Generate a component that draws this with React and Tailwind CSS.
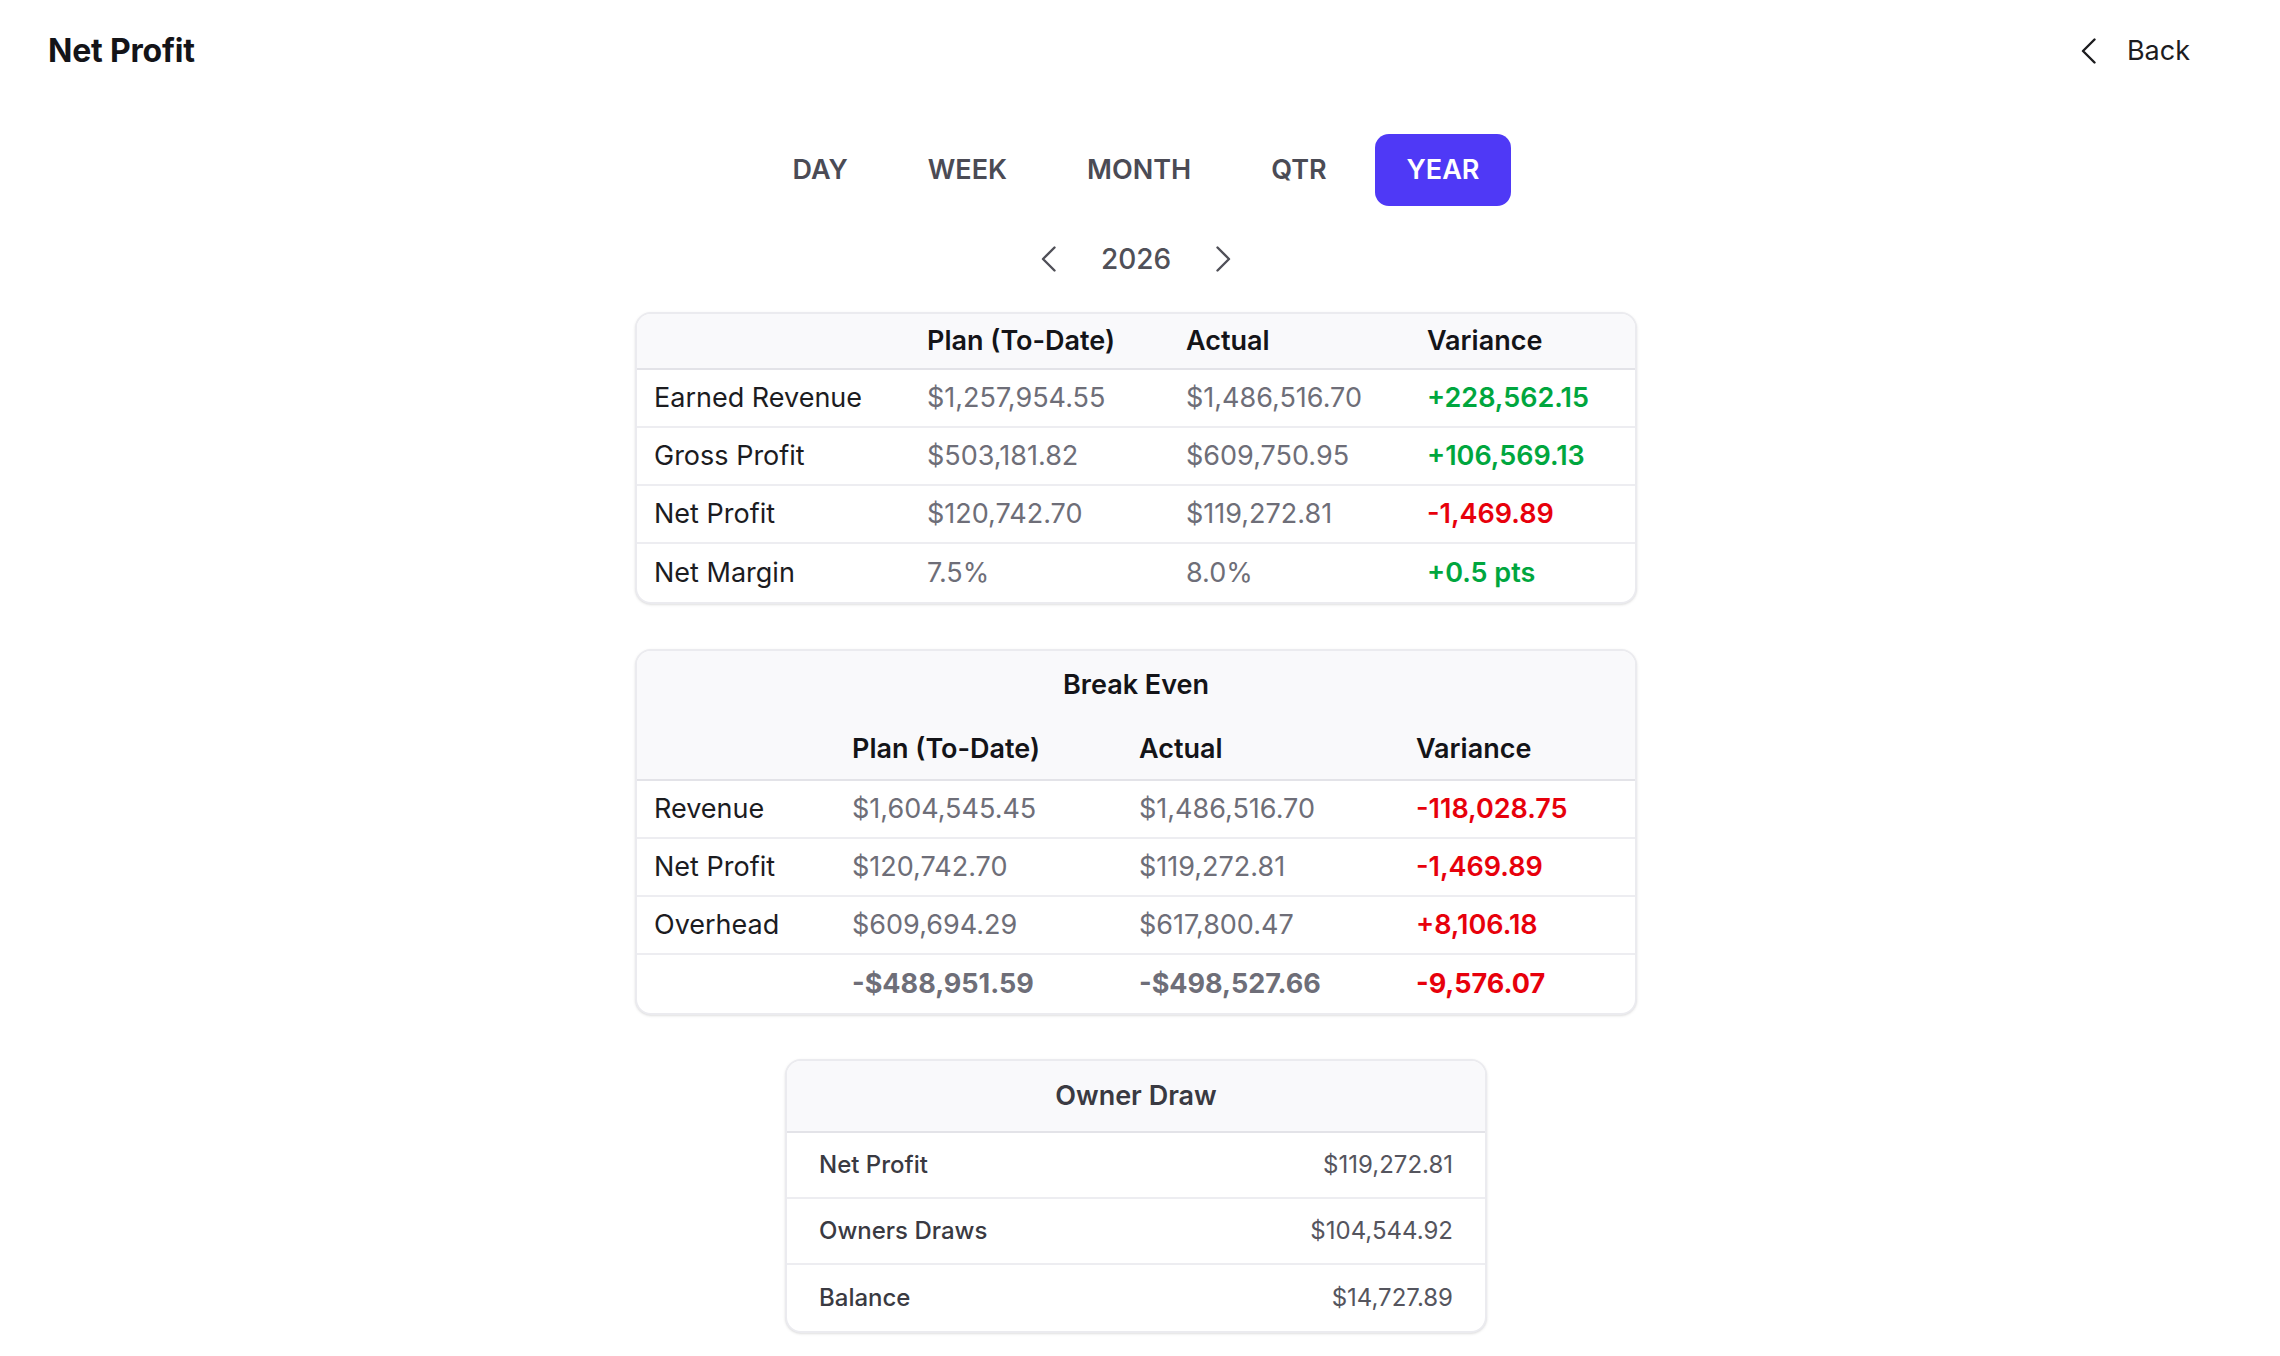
import React from 'react';

const tabs = ['DAY', 'WEEK', 'MONTH', 'QTR', 'YEAR'];

const summary = [
  { label: 'Earned Revenue', plan: '$1,257,954.55', actual: '$1,486,516.70', variance: '+228,562.15', good: true },
  { label: 'Gross Profit', plan: '$503,181.82', actual: '$609,750.95', variance: '+106,569.13', good: true },
  { label: 'Net Profit', plan: '$120,742.70', actual: '$119,272.81', variance: '-1,469.89', good: false },
  { label: 'Net Margin', plan: '7.5%', actual: '8.0%', variance: '+0.5 pts', good: true },
];

const breakEven = [
  { label: 'Revenue', plan: '$1,604,545.45', actual: '$1,486,516.70', variance: '-118,028.75' },
  { label: 'Net Profit', plan: '$120,742.70', actual: '$119,272.81', variance: '-1,469.89' },
  { label: 'Overhead', plan: '$609,694.29', actual: '$617,800.47', variance: '+8,106.18' },
];

const ownerDraw = [
  { label: 'Net Profit', value: '$119,272.81' },
  { label: 'Owners Draws', value: '$104,544.92' },
  { label: 'Balance', value: '$14,727.89' },
];

const Chevron = ({ dir = 'left', className = '' }) => (
  <svg width="15" height="26" viewBox="0 0 15 26" fill="none" className={className}>
    <path
      d={dir === 'left' ? 'M13.5 1.5 L2 13 L13.5 24.5' : 'M1.5 1.5 L13 13 L1.5 24.5'}
      stroke="currentColor"
      strokeWidth="2.4"
      strokeLinecap="round"
      strokeLinejoin="round"
    />
  </svg>
);

const App = () => {
  return (
    <div className="min-h-screen bg-white font-[Inter,'Noto_Sans',sans-serif] text-[#1c1c1f] pb-6">
      {/* top bar */}
      <div className="flex items-center justify-between pl-[48px] pr-[90px] pt-[32px]">
        <h1 className="text-[32px] leading-[38px] font-bold tracking-[-0.2px] text-[#141418]">Net Profit</h1>
        <button className="flex items-center gap-[31px] text-[27px] leading-[38px] text-[#1c1c1f]">
          <Chevron dir="left" />
          Back
        </button>
      </div>

      <div className="pr-[8px]">
        {/* period tabs */}
        <div className="flex justify-center gap-4 mt-[64px]">
          {tabs.map((t) => (
            <button
              key={t}
              className={
                t === 'YEAR'
                  ? 'h-[72px] px-[32px] rounded-[14px] bg-indigo-600 text-white text-[27px] font-semibold'
                  : 'h-[72px] px-[32px] rounded-[14px] text-[#4b4b55] text-[27px] font-semibold'
              }
            >
              {t}
            </button>
          ))}
        </div>

        {/* year nav */}
        <div className="flex items-center justify-center gap-[45px] mt-[34px] text-[#505058]">
          <Chevron dir="left" />
          <span className="text-[28px] leading-[38px] font-medium">2026</span>
          <Chevron dir="right" />
        </div>

        {/* summary table */}
        <div className="mx-auto mt-[34px] w-[1002px] rounded-[16px] border-2 border-[#ebebef] bg-white shadow-sm overflow-hidden text-[27px]">
          <div className="grid grid-cols-[273px_259px_241px_1fr] h-[56px] items-center bg-[#f9f9fb] border-b-2 border-[#e3e3e8] font-semibold text-[#141418]">
            <div />
            <div className="px-[17px]">Plan (To-Date)</div>
            <div className="px-[17px]">Actual</div>
            <div className="px-[17px]">Variance</div>
          </div>
          {summary.map((r, i) => (
            <div
              key={r.label}
              className={`grid grid-cols-[273px_259px_241px_1fr] h-[58px] items-center ${i < summary.length - 1 ? 'border-b-2 border-[#ededf1]' : ''}`}
            >
              <div className="px-[17px] text-[#1c1c1f]">{r.label}</div>
              <div className="px-[17px] text-[#6e6e78]">{r.plan}</div>
              <div className="px-[17px] text-[#6e6e78]">{r.actual}</div>
              <div className={`px-[17px] font-semibold ${r.good ? 'text-green-600' : 'text-red-600'}`}>{r.variance}</div>
            </div>
          ))}
        </div>

        {/* break even */}
        <div className="mx-auto mt-[45px] w-[1002px] rounded-[16px] border-2 border-[#ebebef] bg-white shadow-sm overflow-hidden text-[27px]">
          <div className="bg-[#f9f9fb] border-b-2 border-[#e3e3e8]">
            <div className="h-[68px] flex items-center justify-center font-semibold text-[#141418]">Break Even</div>
            <div className="grid grid-cols-[198px_287px_277px_1fr] h-[60px] items-center font-semibold text-[#141418]">
              <div />
              <div className="px-[17px]">Plan (To-Date)</div>
              <div className="px-[17px]">Actual</div>
              <div className="px-[17px]">Variance</div>
            </div>
          </div>
          {breakEven.map((r) => (
            <div key={r.label} className="grid grid-cols-[198px_287px_277px_1fr] h-[58px] items-center border-b-2 border-[#ededf1]">
              <div className="px-[17px] text-[#1c1c1f]">{r.label}</div>
              <div className="px-[17px] text-[#6e6e78]">{r.plan}</div>
              <div className="px-[17px] text-[#6e6e78]">{r.actual}</div>
              <div className="px-[17px] font-semibold text-red-600">{r.variance}</div>
            </div>
          ))}
          <div className="grid grid-cols-[198px_287px_277px_1fr] h-[58px] items-center font-bold">
            <div />
            <div className="px-[17px] text-[#6e6e78]">-$488,951.59</div>
            <div className="px-[17px] text-[#6e6e78]">-$498,527.66</div>
            <div className="px-[17px] text-red-600">-9,576.07</div>
          </div>
        </div>

        {/* owner draw */}
        <div className="mx-auto mt-[44px] w-[702px] rounded-[16px] border-2 border-[#ebebef] bg-white shadow-sm overflow-hidden">
          <div className="h-[72px] flex items-center justify-center bg-[#f9f9fb] border-b-2 border-[#e3e3e8] text-[27px] font-semibold text-[#3a3a42]">
            Owner Draw
          </div>
          {ownerDraw.map((r, i) => (
            <div
              key={r.label}
              className={`flex items-center justify-between h-[66px] px-[32px] text-[24px] ${i < ownerDraw.length - 1 ? 'border-b-2 border-[#ededf1]' : ''}`}
            >
              <span className="font-medium text-[#3a3a42]">{r.label}</span>
              <span className="text-[#55555e]">{r.value}</span>
            </div>
          ))}
        </div>
      </div>
    </div>
  );
};

export default App;
